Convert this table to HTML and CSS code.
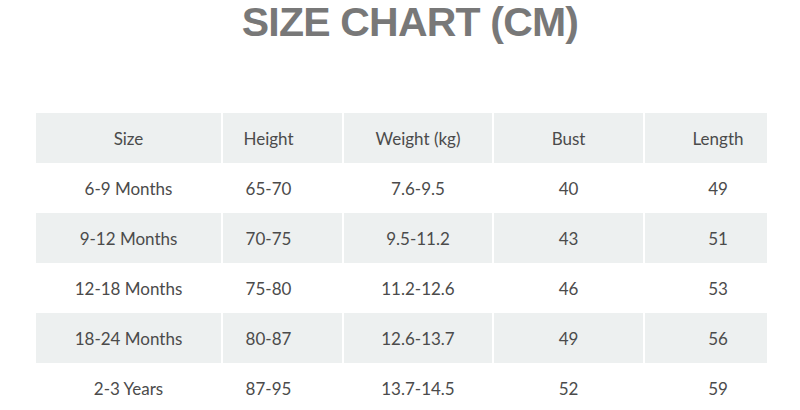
FILE: index.html
```html
<!DOCTYPE html>
<html>
<head>
<meta charset="utf-8">
<link rel="stylesheet" href="styles.css">
</head>
<body>
<div class="page">
  <h1 class="title">SIZE CHART (CM)</h1>
  <div class="chart">
    <div class="row shade">
      <div class="cell c1">Size</div>
      <div class="cell c2">Height</div>
      <div class="cell c3">Weight (kg)</div>
      <div class="cell c4">Bust</div>
      <div class="cell c5">Length</div>
    </div>
    <div class="row">
      <div class="cell c1">6-9 Months</div>
      <div class="cell c2">65-70</div>
      <div class="cell c3">7.6-9.5</div>
      <div class="cell c4">40</div>
      <div class="cell c5">49</div>
    </div>
    <div class="row shade">
      <div class="cell c1">9-12 Months</div>
      <div class="cell c2">70-75</div>
      <div class="cell c3">9.5-11.2</div>
      <div class="cell c4">43</div>
      <div class="cell c5">51</div>
    </div>
    <div class="row">
      <div class="cell c1">12-18 Months</div>
      <div class="cell c2">75-80</div>
      <div class="cell c3">11.2-12.6</div>
      <div class="cell c4">46</div>
      <div class="cell c5">53</div>
    </div>
    <div class="row shade">
      <div class="cell c1">18-24 Months</div>
      <div class="cell c2">80-87</div>
      <div class="cell c3">12.6-13.7</div>
      <div class="cell c4">49</div>
      <div class="cell c5">56</div>
    </div>
    <div class="row">
      <div class="cell c1">2-3 Years</div>
      <div class="cell c2">87-95</div>
      <div class="cell c3">13.7-14.5</div>
      <div class="cell c4">52</div>
      <div class="cell c5">59</div>
    </div>
  </div>
</div>
</body>
</html>
```

FILE: styles.css
```css
html, body {
  margin: 0;
  padding: 0;
  background: #ffffff;
}

.page {
  width: 800px;
  height: 410px;
  overflow: hidden;
  display: flex;
  flex-direction: column;
}

.title {
  margin: 2px 0 0 20px;
  font-family: "Liberation Sans", Arial, sans-serif;
  font-weight: bold;
  font-size: 41px;
  line-height: 41px;
  letter-spacing: -0.8px;
  color: #787878;
  text-align: center;
}

.chart {
  margin: 70px 0 0 36px;
  width: 731px;
  display: flex;
  flex-direction: column;
}

.row {
  display: grid;
  grid-template-columns: 185px 121px 150px 151px 124px;
  height: 50px;
  background: #ffffff;
}

.row.shade {
  background: #edf0f0;
}

.cell {
  display: flex;
  align-items: center;
  justify-content: center;
  font-family: Lato, "Open Sans", sans-serif;
  font-size: 17px;
  color: #4b4b4b;
  border-left: 2px solid #ffffff;
}

.cell.c1 {
  border-left: none;
}

.cell.c2 {
  padding-right: 28px;
}

.cell.c5 {
  padding-left: 24px;
}
```
